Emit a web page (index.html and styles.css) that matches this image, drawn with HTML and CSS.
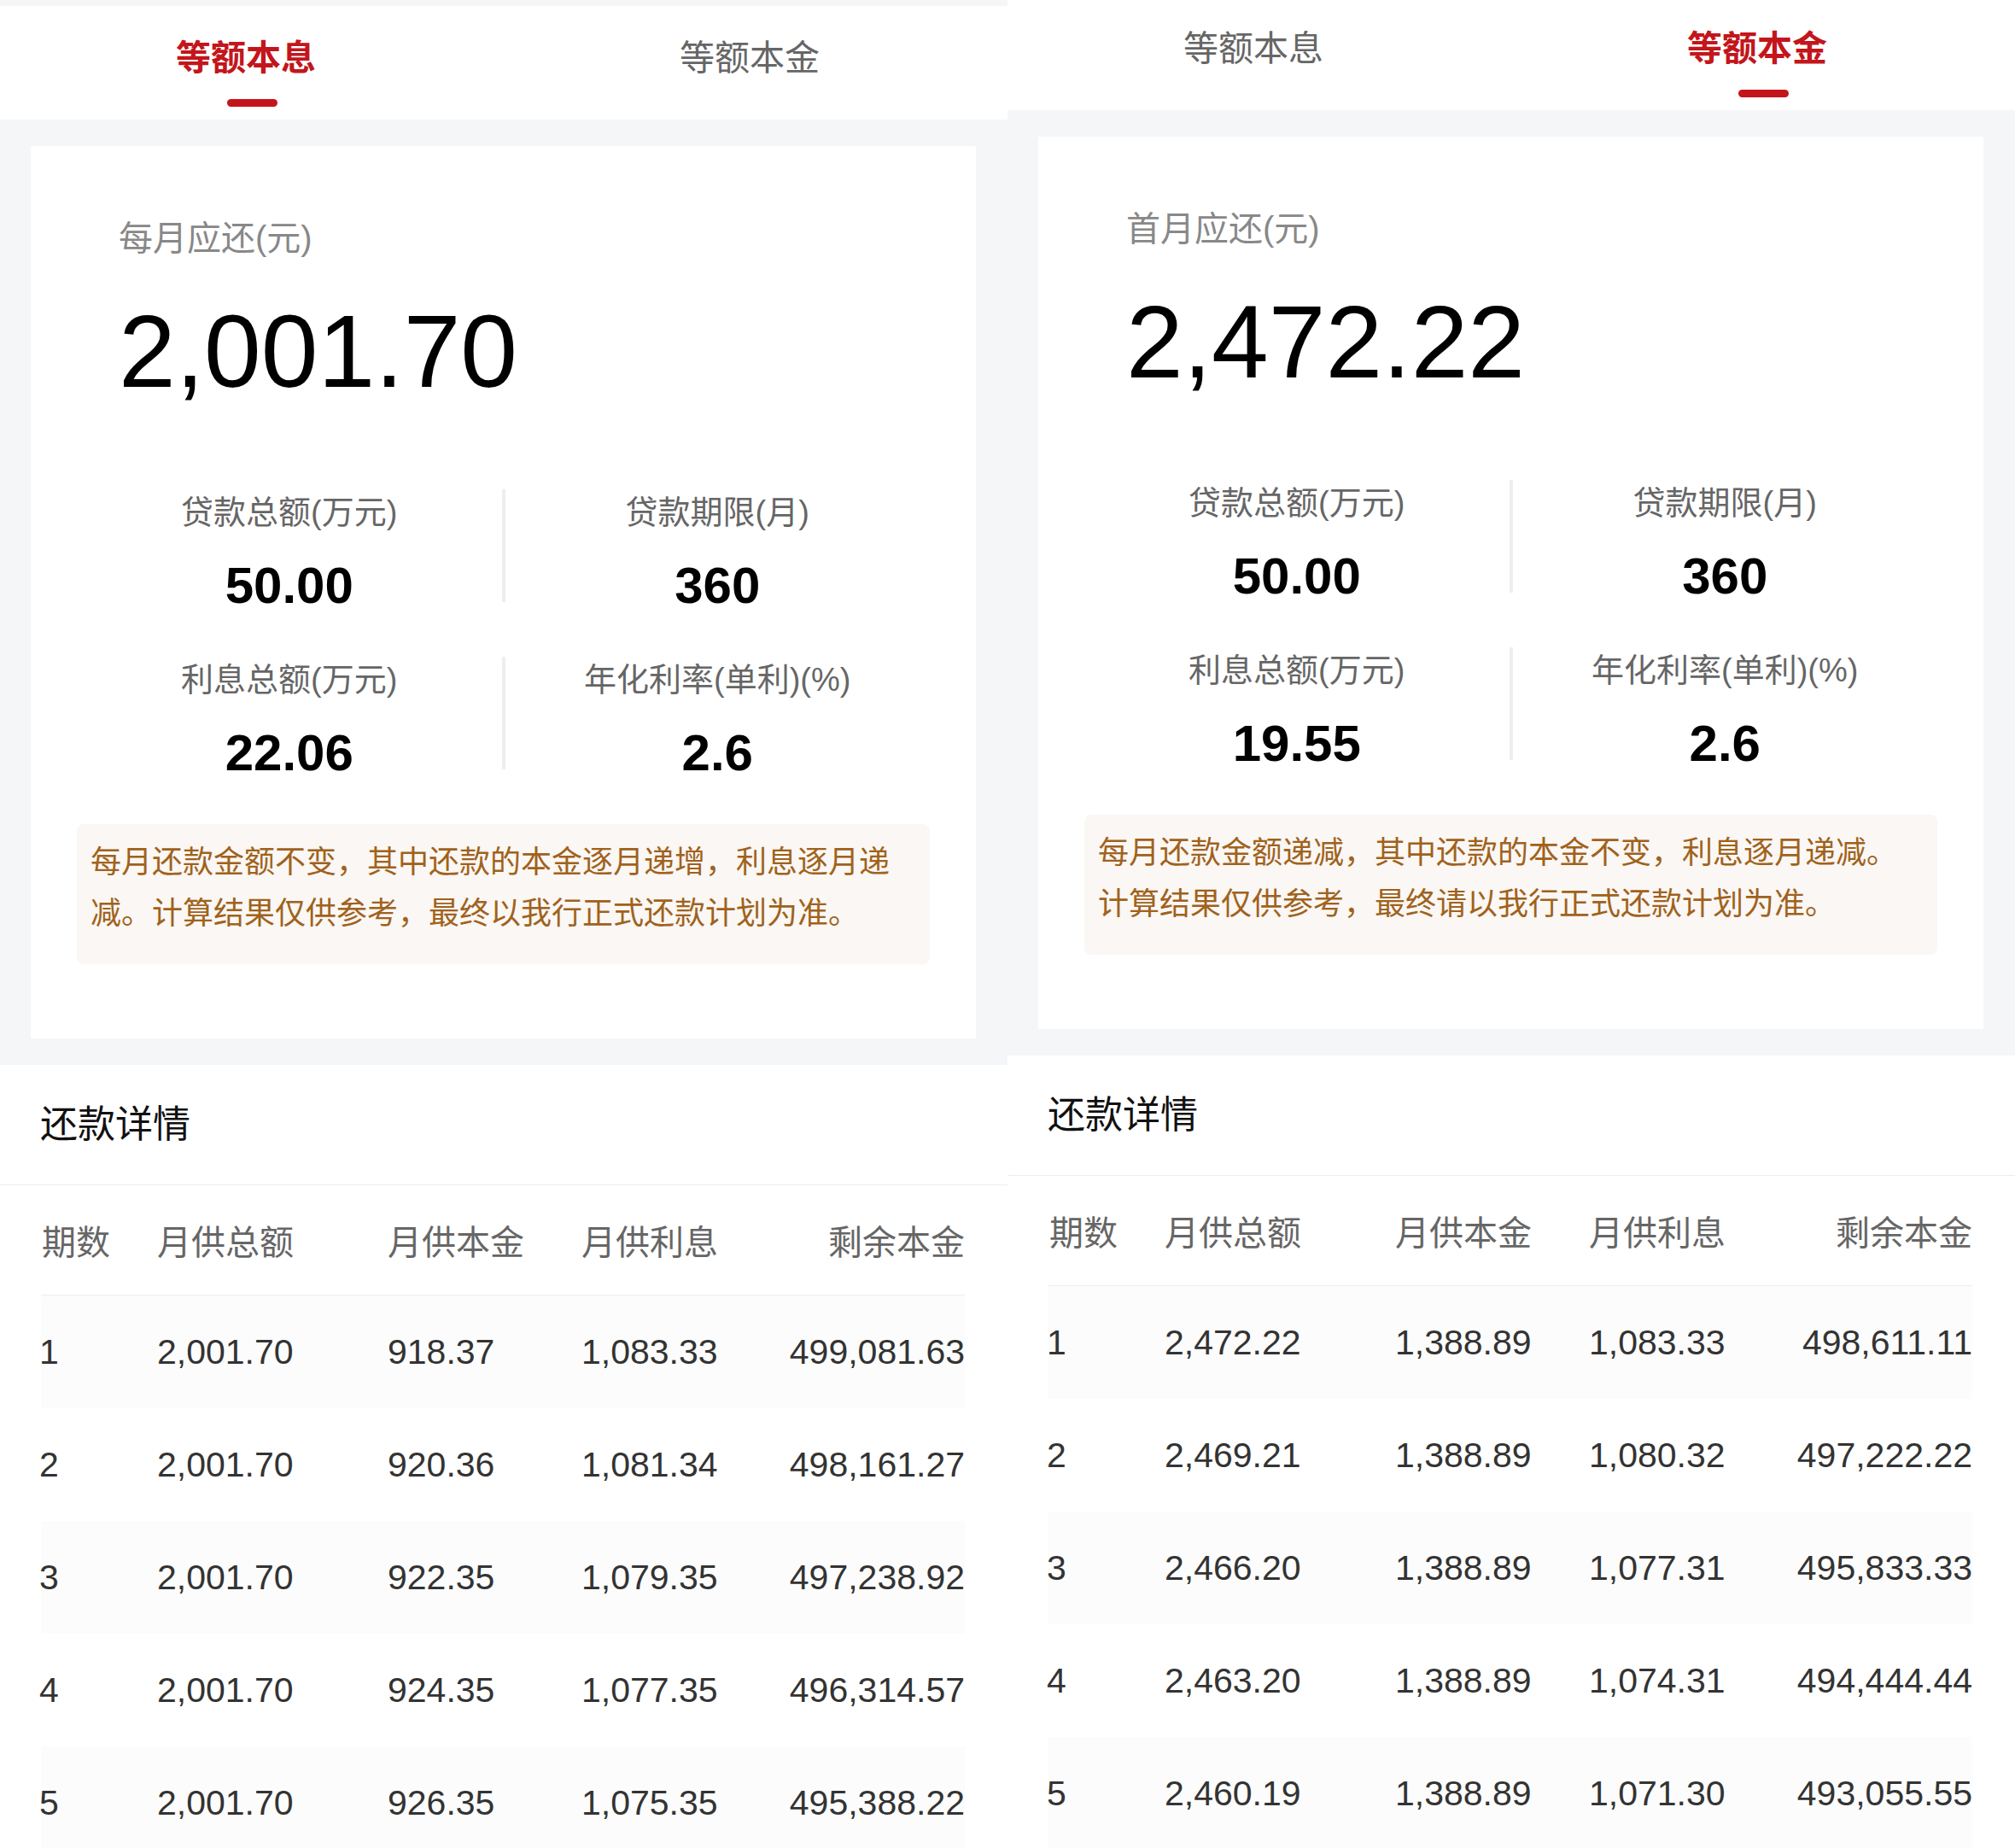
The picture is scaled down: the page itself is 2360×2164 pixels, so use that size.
FILE: index.html
```html
<!DOCTYPE html>
<html lang="zh-CN">
<head>
    <meta charset="UTF-8">
    <meta name="viewport" content="width=device-width, initial-scale=1.0">
    <title>房贷计算结果</title>
    <link rel="stylesheet" href="styles.css">
</head>
<body>

<div class="page">

    <!-- 等额本息 -->
    <div class="panel panel-left">
        <div class="tabs">
            <div class="tab active"><span>等额本息</span><i class="tab-bar"></i></div>
            <div class="tab"><span>等额本金</span><i class="tab-bar"></i></div>
        </div>

        <div class="summary">
            <div class="card">
                <p class="pay-label">每月应还(元)</p>
                <p class="pay-amount">2,001.70</p>

                <div class="stats">
                    <div class="stat">
                        <p class="stat-label">贷款总额(万元)</p>
                        <p class="stat-value">50.00</p>
                    </div>
                    <div class="stat-line"></div>
                    <div class="stat">
                        <p class="stat-label">贷款期限(月)</p>
                        <p class="stat-value">360</p>
                    </div>
                    <div class="stat">
                        <p class="stat-label">利息总额(万元)</p>
                        <p class="stat-value">22.06</p>
                    </div>
                    <div class="stat-line"></div>
                    <div class="stat">
                        <p class="stat-label">年化利率(单利)(%)</p>
                        <p class="stat-value">2.6</p>
                    </div>
                </div>

                <div class="notice">每月还款金额不变，其中还款的本金逐月递增，利息逐月递减。计算结果仅供参考，最终以我行正式还款计划为准。</div>
            </div>
        </div>

        <div class="detail">
            <h3 class="detail-title">还款详情</h3>
            <div class="table">
                <div class="row head">
                    <span>期数</span><span>月供总额</span><span>月供本金</span><span>月供利息</span><span>剩余本金</span>
                </div>
                <div class="row"><span>1</span><span>2,001.70</span><span>918.37</span><span>1,083.33</span><span>499,081.63</span></div>
                <div class="row"><span>2</span><span>2,001.70</span><span>920.36</span><span>1,081.34</span><span>498,161.27</span></div>
                <div class="row"><span>3</span><span>2,001.70</span><span>922.35</span><span>1,079.35</span><span>497,238.92</span></div>
                <div class="row"><span>4</span><span>2,001.70</span><span>924.35</span><span>1,077.35</span><span>496,314.57</span></div>
                <div class="row"><span>5</span><span>2,001.70</span><span>926.35</span><span>1,075.35</span><span>495,388.22</span></div>
            </div>
        </div>
    </div>

    <!-- 等额本金 -->
    <div class="panel panel-right">
        <div class="tabs">
            <div class="tab"><span>等额本息</span><i class="tab-bar"></i></div>
            <div class="tab active"><span>等额本金</span><i class="tab-bar"></i></div>
        </div>

        <div class="summary">
            <div class="card">
                <p class="pay-label">首月应还(元)</p>
                <p class="pay-amount">2,472.22</p>

                <div class="stats">
                    <div class="stat">
                        <p class="stat-label">贷款总额(万元)</p>
                        <p class="stat-value">50.00</p>
                    </div>
                    <div class="stat-line"></div>
                    <div class="stat">
                        <p class="stat-label">贷款期限(月)</p>
                        <p class="stat-value">360</p>
                    </div>
                    <div class="stat">
                        <p class="stat-label">利息总额(万元)</p>
                        <p class="stat-value">19.55</p>
                    </div>
                    <div class="stat-line"></div>
                    <div class="stat">
                        <p class="stat-label">年化利率(单利)(%)</p>
                        <p class="stat-value">2.6</p>
                    </div>
                </div>

                <div class="notice">每月还款金额递减，其中还款的本金不变，利息逐月递减。<br>计算结果仅供参考，最终请以我行正式还款计划为准。</div>
            </div>
        </div>

        <div class="detail">
            <h3 class="detail-title">还款详情</h3>
            <div class="table">
                <div class="row head">
                    <span>期数</span><span>月供总额</span><span>月供本金</span><span>月供利息</span><span>剩余本金</span>
                </div>
                <div class="row"><span>1</span><span>2,472.22</span><span>1,388.89</span><span>1,083.33</span><span>498,611.11</span></div>
                <div class="row"><span>2</span><span>2,469.21</span><span>1,388.89</span><span>1,080.32</span><span>497,222.22</span></div>
                <div class="row"><span>3</span><span>2,466.20</span><span>1,388.89</span><span>1,077.31</span><span>495,833.33</span></div>
                <div class="row"><span>4</span><span>2,463.20</span><span>1,388.89</span><span>1,074.31</span><span>494,444.44</span></div>
                <div class="row"><span>5</span><span>2,460.19</span><span>1,388.89</span><span>1,071.30</span><span>493,055.55</span></div>
            </div>
        </div>
    </div>

</div>

</body>
</html>
```

FILE: styles.css
```css
body {
    margin: 0;
    font-family: 'Liberation Sans', 'Noto Sans CJK SC', sans-serif;
    color: #000;
    background-color: #fff;
}
p, h3 {
    margin: 0;
}
.page {
    display: flex;
    height: 2164px;
    overflow: hidden;
}
.panel {
    width: 1180px;
    flex: none;
    background-color: #f5f6f8;
}
.panel-left {
    padding-top: 7px;
}
.panel-right {
    margin-top: -4px;
}

/* tabs */
.tabs {
    display: flex;
    height: 133px;
    background-color: #fff;
}
.tab {
    flex: 1;
    display: flex;
    flex-direction: column;
    align-items: center;
    padding-top: 33px;
    font-size: 41px;
    line-height: 56px;
    color: #666;
}
.tab span {
    margin-right: 14px;
}
.tab-bar {
    display: block;
    width: 59px;
    height: 9px;
    margin-top: 20px;
    border-radius: 5px;
}
.tab.active {
    color: #c3161c;
    font-weight: bold;
}
.tab.active .tab-bar {
    background-color: #c3161c;
}

/* summary card */
.summary {
    padding: 31px 37px 31px 36px;
}
.card {
    background-color: #fff;
    padding: 80px 54px 87px;
}
.pay-label {
    margin-left: 49px;
    font-size: 40px;
    line-height: 56px;
    color: #888;
}
.pay-amount {
    margin: 44px 0 0 49px;
    font-size: 120px;
    line-height: 1;
    color: #000;
}
.stats {
    display: grid;
    grid-template-columns: 1fr 4px 1fr;
    row-gap: 53px;
    margin-top: 102px;
    text-align: center;
}
.stat {
    padding-top: 2px;
}
.stat-line {
    height: 132px;
    background-color: #eeeeee;
}
.stat-label {
    font-size: 38px;
    line-height: 50px;
    color: #666;
}
.stat-value {
    margin-top: 31px;
    font-size: 60px;
    line-height: 60px;
    font-weight: bold;
    color: #000;
}
.notice {
    margin-top: 53px;
    padding: 15px 16px 29px;
    background-color: #faf7f4;
    border-radius: 8px;
    font-size: 36px;
    line-height: 60px;
    color: #a0621c;
}

/* repayment table */
.detail {
    background-color: #fff;
    height: 1000px;
}
.detail-title {
    height: 140px;
    padding-left: 47px;
    font-size: 44px;
    line-height: 140px;
    font-weight: normal;
    color: #111;
    border-bottom: 1px solid #ececec;
}
.table {
    margin: 0 50px 0 48px;
}
.row {
    display: grid;
    grid-template-columns: 136px 270px 227px 220px 1fr;
    align-items: center;
    height: 132px;
    font-size: 41px;
    color: #333;
}
.row span:first-child {
    margin-left: -2px;
}
.row span:last-child {
    text-align: right;
}
.row.head {
    height: 128px;
    font-size: 40px;
    color: #666;
    border-bottom: 1px solid #ededed;
}
.row.head span:first-child {
    margin-left: 1px;
}
.row:nth-child(even) {
    background-color: #fcfcfc;
}
```
